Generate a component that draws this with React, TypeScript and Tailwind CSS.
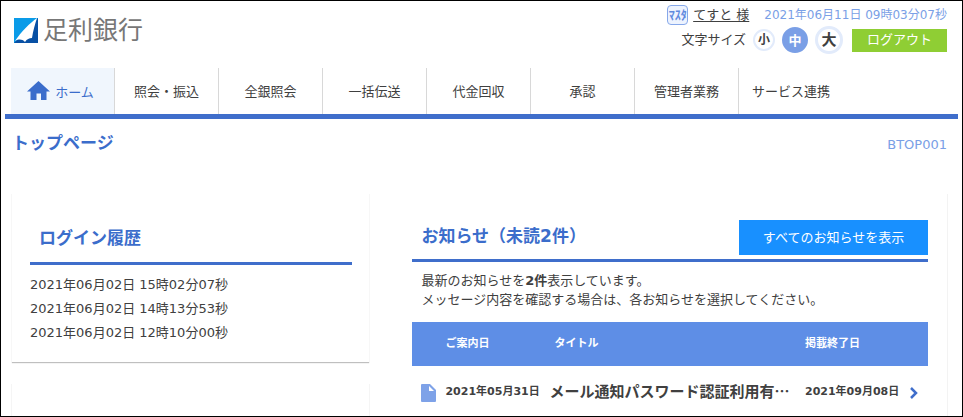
import { useState } from 'react';

const NAV_ITEMS = ['照会・振込', '全銀照会', '一括伝送', '代金回収', '承認', '管理者業務', 'サービス連携'];

const LOGIN_HISTORY = [
  '2021年06月02日 15時02分07秒',
  '2021年06月02日 14時13分53秒',
  '2021年06月02日 12時10分00秒',
];

const NOTICES = [
  { date: '2021年05月31日', title: 'メール通知パスワード認証利用有…', until: '2021年09月08日' },
];

const SIZES = [
  { label: '小', box: 'size-[22px] border-2 text-xs' },
  { label: '中', box: 'size-[26px] border-2 text-[13px]' },
  { label: '大', box: 'size-7 border-3 text-[15px]' },
];

function Logo() {
  return (
    <a href="#" className="flex items-center gap-[5px]">
      <svg viewBox="0 0 24 25" className="w-6 h-[25px]" aria-hidden="true">
        <rect width="24" height="25" fill="#0a9be8" />
        <path d="M0 25 L24 0 V25 Z" fill="#0850a4" />
        <path d="M23 0 C16 5 7 14 1 23 C5 21 8 21 11 24 C13 21 15 20 18 20 C19 13 21 6 23 0 Z" fill="#fff" />
      </svg>
      <span className="pb-1 text-[25px] leading-7 text-[#777777] font-['Noto_Sans_CJK_JP',sans-serif]">足利銀行</span>
    </a>
  );
}

function Header() {
  const [size, setSize] = useState('中');

  return (
    <header className="flex justify-between pl-[9px] pr-[11px]">
      <div className="pt-[13px]">
        <Logo />
      </div>
      <div className="flex flex-col items-end gap-px pt-1">
        <div className="flex items-center leading-5">
          <span className="flex items-center justify-center w-[21px] h-5 mr-[5px] rounded-sm border border-[#86a8ea] bg-[#edf3fe] text-xs leading-4 whitespace-nowrap font-bold text-[#5f89de] font-['Noto_Sans_CJK_JP',sans-serif]">
            ﾏｽﾀ
          </span>
          <a href="#" className="underline underline-offset-2">てすと 様</a>
          <span className="ml-[15px] text-xs leading-5 text-[#7aa0e6]">2021年06月11日 09時03分07秒</span>
        </div>
        <div className="flex items-center">
          <span className="mr-[7px]">文字サイズ</span>
          <div className="flex items-center gap-[7px]">
            {SIZES.map(({ label, box }) => (
              <button
                key={label}
                type="button"
                onClick={() => setSize(label)}
                className={`flex items-center justify-center rounded-full font-bold leading-none ${box} ${
                  size === label ? 'bg-[#7a9fe6] border-[#7a9fe6] text-white' : 'bg-white border-[#e2ebfb] text-[#404040]'
                }`}
              >
                {label}
              </button>
            ))}
          </div>
          <button type="button" className="w-[95px] h-[23px] ml-[9px] bg-[#8fce34] text-white leading-5">
            ログアウト
          </button>
        </div>
      </div>
    </header>
  );
}

function Nav() {
  return (
    <nav className="flex mt-[14px] pl-[6px] border-b-5 border-[#3f6ecb]">
      <a
        href="#"
        className="flex items-center justify-center gap-[5px] w-[104px] h-[46px] pt-1 pr-1 border-r border-[#d8d8d8] bg-[#f0f6fd] text-[#3b6dcb]"
      >
        <svg viewBox="0 0 23 20" className="w-[23px] h-5 mb-1" fill="currentColor" aria-hidden="true">
          <path d="M11.500 0 L23 10.500 H19.500 V19 H14 V12.500 H9.500 V19 H3.500 V10.500 H0 Z" />
        </svg>
        <span>ホーム</span>
      </a>
      {NAV_ITEMS.map((item) => (
        <a
          key={item}
          href="#"
          className="flex items-center justify-center w-[104px] h-[46px] pt-px border-r border-[#d8d8d8] last:border-r-0"
        >
          {item}
        </a>
      ))}
    </nav>
  );
}

function LoginHistory() {
  return (
    <section className="pl-[18px] pr-[17px] pt-8 pb-[17px] border-x border-[#f7f7f7] shadow-[0_2px_1px_-1px_rgba(0,0,0,0.25)]">
      <h2 className="pl-[9px] pb-3 border-b-3 border-[#3f6ecb] text-[17px] leading-6 font-bold text-[#3b6dcb]">
        ログイン履歴
      </h2>
      <ul className="pt-2">
        {LOGIN_HISTORY.map((entry) => (
          <li key={entry} className="leading-6">{entry}</li>
        ))}
      </ul>
    </section>
  );
}

function Notices() {
  return (
    <section className="pl-5 pr-[19px] pt-[26px] border-r border-[#f3f3f3]">
      <div className="flex items-start justify-between pb-1 pl-[9px] border-b-3 border-[#3f6ecb]">
        <h2 className="pt-1 text-[17px] leading-6 font-bold text-[#3b6dcb]">お知らせ（未読2件）</h2>
        <button type="button" className="w-[189px] h-[35px] bg-[#1890ff] text-white">
          すべてのお知らせを表示
        </button>
      </div>
      <p className="pt-[9px] pl-[9px] pb-[13px] leading-[19px]">
        最新のお知らせを<strong>2件</strong>表示しています。
        <br />
        メッセージ内容を確認する場合は、各お知らせを選択してください。
      </p>
      <table className="w-full text-[11px] text-left font-bold">
        <thead>
          <tr className="h-11 bg-[#5e8ee6] text-white">
            <th className="w-[33px]" aria-label="種別" />
            <th className="w-[104px]">ご案内日</th>
            <th className="pl-[5px]">タイトル</th>
            <th className="w-[103px]">掲載終了日</th>
            <th className="w-5" aria-label="詳細" />
          </tr>
        </thead>
        <tbody>
          {NOTICES.map(({ date, title, until }) => (
            <tr key={date} className="h-[50px] whitespace-nowrap">
              <td className="pt-1 pl-[9px]">
                <svg viewBox="0 0 15 18" className="w-[15px] h-[18px]" aria-hidden="true">
                  <path d="M1 0 H9 L15 6 V17 Q15 18 14 18 H1 Q0 18 0 17 V1 Q0 0 1 0 Z" fill="#7ea2e8" />
                  <path d="M8 2 V7 H13 Z" fill="#fff" />
                </svg>
              </td>
              <td className="pt-0.5">{date}</td>
              <td>
                <a href="#" className="text-[15px] font-['Noto_Sans_CJK_JP',sans-serif]">{title}</a>
              </td>
              <td className="pt-0.5">{until}</td>
              <td className="pt-1">
                <svg viewBox="0 0 10 14" className="w-[10px] h-[14px]" fill="none" stroke="#3f6ecb" strokeWidth="2.500" aria-hidden="true">
                  <path d="M3 2 L8 7 L3 12" />
                </svg>
              </td>
            </tr>
          ))}
        </tbody>
      </table>
    </section>
  );
}

export default function App() {
  return (
    <div className="flex flex-col min-h-screen px-1 border border-black bg-white text-[13px] text-[#404040] font-['DejaVu_Sans','Noto_Sans_CJK_JP',sans-serif]">
      <Header />
      <Nav />
      <div className="flex items-center justify-between pt-3 pl-[7px] pr-[11px]">
        <h1 className="text-[17px] leading-6 font-bold text-[#3b6dcb]">トップページ</h1>
        <span className="pt-[3px] text-[#7aa0e6]">BTOP001</span>
      </div>
      <main className="grid grid-cols-[11fr_17fr] gap-[22px] grow mt-[39px] pl-[6px] pr-[10px]">
        <div className="flex flex-col gap-[22px]">
          <LoginHistory />
          <section className="grow border-x border-[#f5f5f5]" />
        </div>
        <Notices />
      </main>
    </div>
  );
}
